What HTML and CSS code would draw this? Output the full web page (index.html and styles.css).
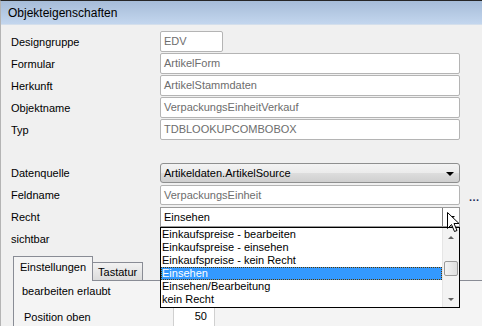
FILE: index.html
```html
<!DOCTYPE html>
<html lang="de">
<head>
  <meta charset="UTF-8">
  <title>Objekteigenschaften</title>
  <link rel="stylesheet" href="styles.css">
</head>
<body>

<div class="window">
  <div class="titlebar">Objekteigenschaften</div>

  <div class="body">
    <!-- Stammdaten des Objekts -->
    <div class="fields">
      <span class="lbl">Designgruppe</span>
      <div class="edit ro short">EDV</div>
      <span></span>

      <span class="lbl">Formular</span>
      <div class="edit ro">ArtikelForm</div>
      <span></span>

      <span class="lbl">Herkunft</span>
      <div class="edit ro">ArtikelStammdaten</div>
      <span></span>

      <span class="lbl">Objektname</span>
      <div class="edit ro">VerpackungsEinheitVerkauf</div>
      <span></span>

      <span class="lbl">Typ</span>
      <div class="edit ro">TDBLOOKUPCOMBOBOX</div>
      <span></span>
    </div>

    <!-- Datenbindung -->
    <div class="fields data">
      <span class="lbl">Datenquelle</span>
      <div class="combo button-combo">Artikeldaten.ArtikelSource<span class="arrow"></span></div>
      <span></span>

      <span class="lbl">Feldname</span>
      <div class="edit ro">VerpackungsEinheit</div>
      <span class="dots">...</span>

      <span class="lbl">Recht</span>
      <div class="combo open-combo">Einsehen<span class="dropbtn"><span class="arrow"></span></span></div>
      <span></span>

      <span class="lbl">sichtbar</span>
      <span></span>
      <span></span>
    </div>

    <div class="tabs">
      <div class="tabstrip">
        <div class="tab active">Einstellungen</div>
        <div class="tab">Tastatur</div>
      </div>
      <div class="tabpanel">
        <div class="panel-row first">bearbeiten erlaubt</div>
        <div class="panel-row second">
          <span class="plbl">Position oben</span>
          <div class="edit num">50</div>
        </div>
      </div>
    </div>
  </div>

  <!-- aufgeklappte Liste des Recht-Feldes -->
  <div class="droplist">
    <div class="items">
      <div class="item">Einkaufspreise - bearbeiten</div>
      <div class="item">Einkaufspreise - einsehen</div>
      <div class="item">Einkaufspreise - kein Recht</div>
      <div class="item selected">Einsehen</div>
      <div class="item">Einsehen/Bearbeitung</div>
      <div class="item">kein Recht</div>
    </div>
    <div class="scrollbar">
      <span class="sarrow up"></span>
      <span class="thumb"></span>
      <span class="sarrow down"></span>
    </div>
  </div>

  <svg class="cursor" width="13" height="21" viewBox="0 0 13 21">
    <path d="M0.5 0.5 L0.5 16.5 L4.5 12.5 L7.5 19.5 L10 18.5 L7 11.5 L12 11.5 Z" fill="#fff" stroke="#000" stroke-width="1"/>
  </svg>
</div>

</body>
</html>
```

FILE: styles.css
```css
html, body {
  margin: 0;
  padding: 0;
}
body {
  font-family: "Liberation Sans", Arial, sans-serif;
  font-size: 11px;
  color: #000;
  background: #f0f0f0;
}

.window {
  position: relative;
  width: 482px;
  height: 326px;
  overflow: hidden;
  background: #f0f0f0;
  border-top: 1px solid #262626;
  box-sizing: border-box;
  border-left: 1px solid #b4b4b4;
}

.titlebar {
  height: 24px;
  line-height: 24px;
  padding-left: 7px;
  font-size: 12px;
  background: linear-gradient(#a6bcd8, #c3d6ee);
  border-bottom: 1px solid #d4dfec;
  box-sizing: border-box;
}

.body {
  padding: 6px 0 0 10px;
}

.fields {
  display: grid;
  grid-template-columns: 149px 300px 1fr;
  grid-auto-rows: 21px;
  row-gap: 1px;
  align-items: center;
}
.fields.data {
  margin-top: 23px;
  grid-auto-rows: 20px;
  row-gap: 2px;
}

.lbl {
  line-height: 14px;
}

.edit {
  height: 100%;
  box-sizing: border-box;
  background: #fff;
  border: 1px solid #b4b4b4;
  border-radius: 2px;
  padding: 0 3px;
  line-height: 19px;
  white-space: nowrap;
  overflow: hidden;
}
.edit.ro {
  color: #6d6d6d;
}
.edit.short {
  width: 63px;
}

.combo {
  position: relative;
  height: 100%;
  box-sizing: border-box;
  padding: 0 3px;
  line-height: 18px;
  white-space: nowrap;
}
.button-combo {
  border: 1px solid #8e8f8f;
  border-radius: 3px;
  background: linear-gradient(#f3f3f3 0%, #ebebeb 50%, #dddddd 51%, #cfcfcf 100%);
}
.open-combo {
  border: 1px solid #9a9a9a;
  background: #fff;
}
.arrow {
  position: absolute;
  right: 5px;
  top: 8px;
  border-left: 4px solid transparent;
  border-right: 4px solid transparent;
  border-top: 4px solid #000;
}
.dropbtn {
  position: absolute;
  right: 0;
  top: 0;
  bottom: 0;
  width: 16px;
  border-left: 1px solid #7a7a7a;
}
.dropbtn .arrow {
  right: 4px;
}

.dots {
  padding-left: 9px;
  font-weight: bold;
  color: #1d2c5a;
  letter-spacing: 0.5px;
  line-height: 8px;
  align-self: end;
  margin-bottom: 4px;
}

.tabs {
  margin-top: 7px;
  margin-left: 2px;
}
.tabstrip {
  display: flex;
  align-items: flex-end;
  height: 24px;
}
.tab {
  box-sizing: border-box;
  border: 1px solid #898c95;
  border-bottom: none;
  padding: 0 5px;
}
.tab.active {
  line-height: 20px;
  background: #f4f4f4;
  position: relative;
  z-index: 1;
  padding: 0 6px;
  margin-bottom: -1px;
  height: 25px;
}
.tab + .tab {
  border-left: none;
}
.tab:not(.active) {
  height: 18px;
  line-height: 18px;
  background: linear-gradient(#f2f2f2, #dcdcdc);
}
.tabpanel {
  border-top: 1px solid #898c95;
  border-left: 1px solid #898c95;
  background: #f4f4f4;
  height: 60px;
}
.panel-row.first {
  padding: 3px 0 0 8px;
  height: 18px;
  line-height: 14px;
}
.panel-row.second {
  display: flex;
  align-items: center;
  padding-left: 10px;
  margin-top: 4px;
}
.plbl {
  width: 149px;
}
.edit.num {
  width: 42px;
  height: 22px;
  text-align: right;
  padding-right: 7px;
  border-color: #d0d0d0;
}

.droplist {
  position: absolute;
  left: 159px;
  top: 226px;
  width: 300px;
  height: 81px;
  box-sizing: border-box;
  border: 1px solid #000;
  background: #fff;
  display: flex;
  font-size: 11px;
}
.items {
  flex: 1;
}
.item {
  height: 13px;
  line-height: 13px;
  padding-left: 1px;
  white-space: nowrap;
}
.item.selected {
  background: #3399ff;
  color: #fff;
  outline: 1px dotted #5a3a00;
  outline-offset: -1px;
}
.scrollbar {
  width: 16px;
  background: #f3f3f3;
  border-left: 1px solid #e6e6e6;
  position: relative;
}
.sarrow {
  position: absolute;
  left: 5px;
  border-left: 3px solid transparent;
  border-right: 3px solid transparent;
}
.sarrow.up {
  top: 8px;
  border-bottom: 3px solid #606060;
}
.sarrow.down {
  bottom: 6px;
  border-top: 3px solid #606060;
}
.thumb {
  position: absolute;
  left: 1px;
  right: 1px;
  top: 33px;
  height: 15px;
  border: 1px solid #9a9a9a;
  border-radius: 2px;
  background: linear-gradient(90deg, #f4f4f4, #dedede);
  box-sizing: border-box;
}

.cursor {
  position: absolute;
  left: 446px;
  top: 211px;
}
```
